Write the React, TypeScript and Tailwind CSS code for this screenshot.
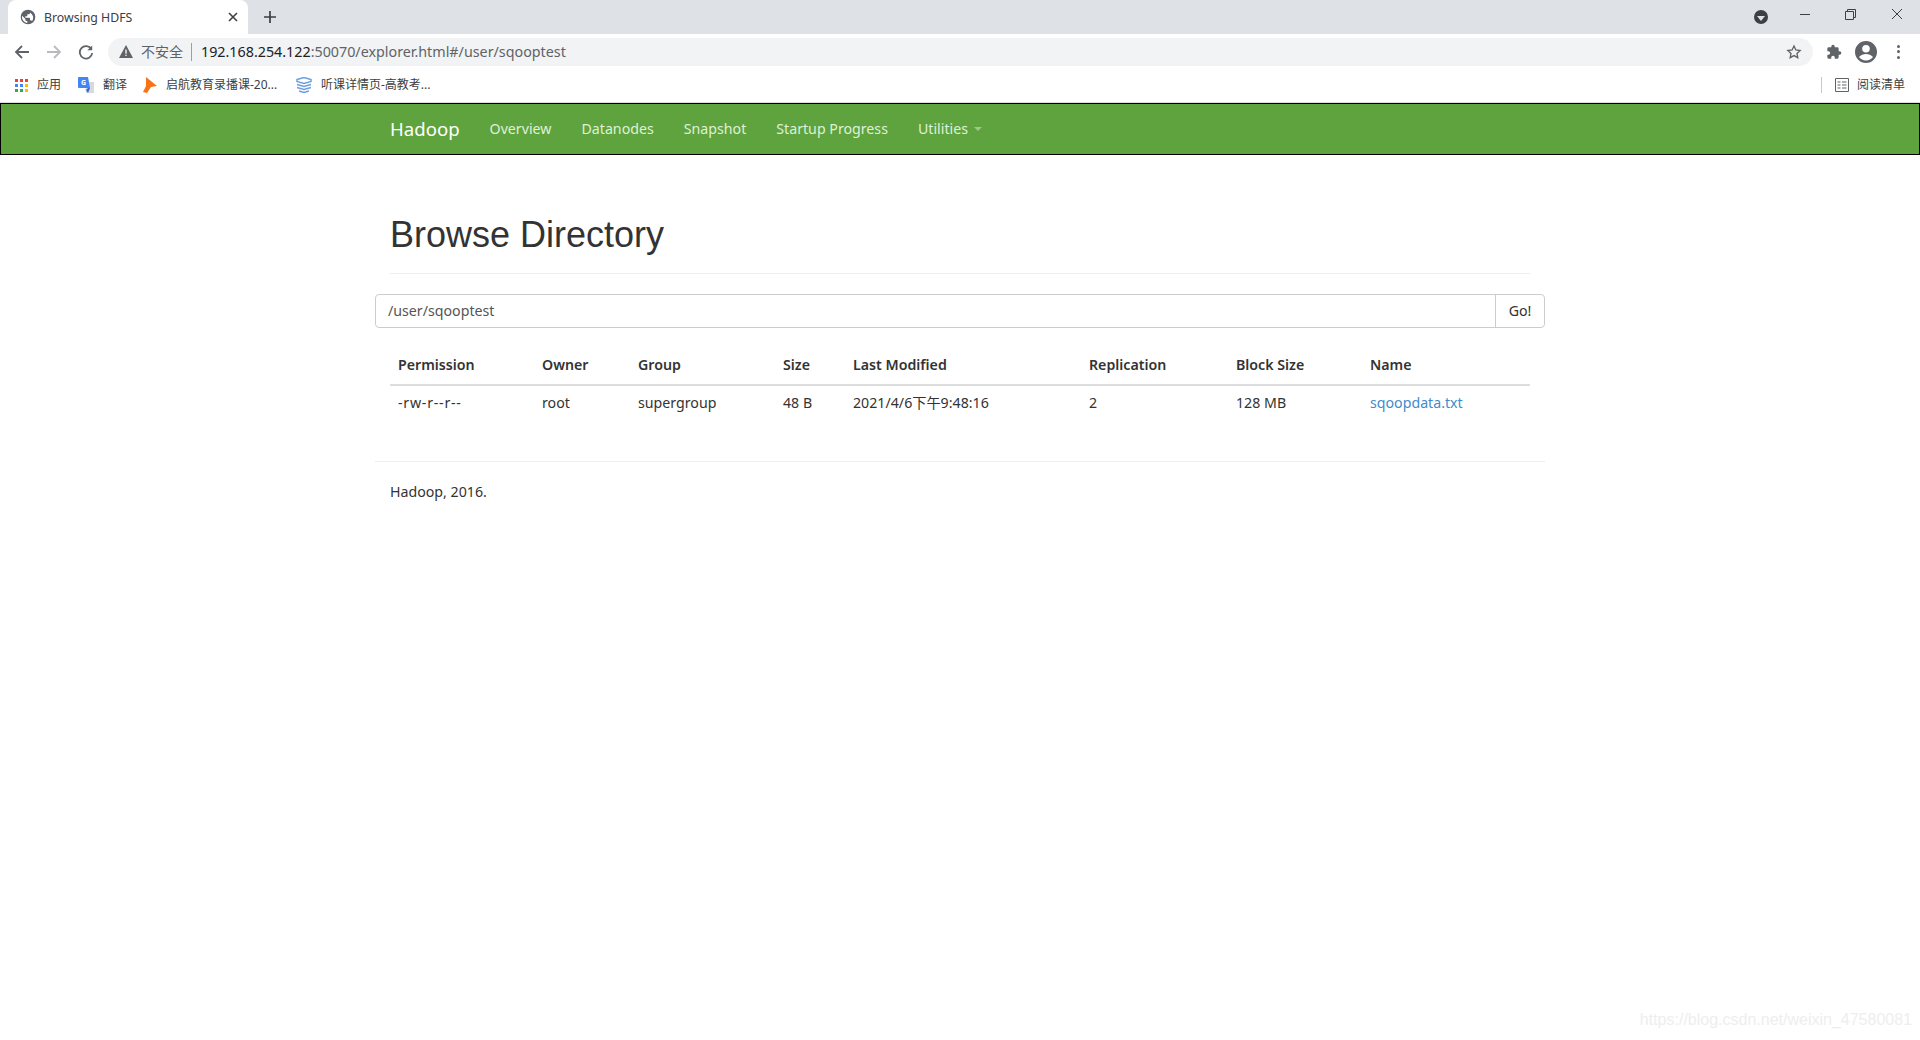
const cjk = "font-['Noto_Sans','Noto_Sans_CJK_SC',sans-serif]";

const headers = [
  { label: "Permission", width: "w-[144px]" },
  { label: "Owner", width: "w-[96px]" },
  { label: "Group", width: "w-[145px]" },
  { label: "Size", width: "w-[70px]" },
  { label: "Last Modified", width: "w-[236px]" },
  { label: "Replication", width: "w-[147px]" },
  { label: "Block Size", width: "w-[134px]" },
  { label: "Name", width: "w-[168px]" },
];

const row = ["-rw-r--r--", "root", "supergroup", "48 B", "2021/4/6下午9:48:16", "2", "128 MB"];

const appColors = ["#ea4335", "#ea4335", "#ea4335", "#4285f4", "#4285f4", "#fbbc04", "#34a853", "#34a853", "#fbbc04"];

function TabStrip() {
  return (
    <div className="flex h-[34px] items-end bg-[#dee1e6] pl-2">
      <div className="flex h-[34px] w-[240px] items-center rounded-t-lg bg-white pl-[12px] pr-[9px]">
        <svg width="16" height="16" viewBox="0 0 24 24" fill="#5f6368">
          <path d="M12 1a11 11 0 1 0 0 22 11 11 0 0 0 0-22Zm-1 19.900A9 9 0 0 1 3.200 10L8 15v1a2 2 0 0 0 2 2h1v2.900Zm7-2.600A2 2 0 0 0 16 17h-1v-3a1 1 0 0 0-1-1H8v-2h2a1 1 0 0 0 1-1V8h2a2 2 0 0 0 2-2v-.9a9 9 0 0 1 3 13.200Z" />
        </svg>
        <span className={`ml-[8px] mt-[2px] flex-1 text-[12.3px] text-[#3c4043] ${cjk}`}>Browsing HDFS</span>
        <svg width="12" height="12" viewBox="0 0 12 12" stroke="#3c4043" strokeWidth="1.6">
          <path d="M2 2l8 8M10 2l-8 8" />
        </svg>
      </div>
      <svg className="mb-[10px] ml-[15px]" width="14" height="14" viewBox="0 0 14 14" stroke="#3c4043" strokeWidth="1.7">
        <path d="M7 1v12M1 7h12" />
      </svg>
      <div className="flex-1" />
      <div className="mb-[10px] mr-[32px] flex h-[14px] w-[14px] items-center justify-center rounded-full bg-[#3c4043]">
        <div className="mt-[2px] h-0 w-0 border-x-[4px] border-t-[5px] border-x-transparent border-t-[#dee1e6]" />
      </div>
      <div className="mb-[19px] mr-[35px] h-[1.5px] w-[10px] bg-[#3c4043]" />
      <svg className="mb-[14px] mr-[35px]" width="11" height="11" viewBox="0 0 11 11" fill="none" stroke="#3c4043">
        <path d="M.5 2.500h8v8h-8zM2.500 2.500v-2h8v8h-2" />
      </svg>
      <svg className="mb-[14px] mr-[17px]" width="12" height="12" viewBox="0 0 12 12" stroke="#3c4043">
        <path d="M1 1l10 10M11 1L1 11" />
      </svg>
    </div>
  );
}

function Toolbar() {
  return (
    <div className="flex h-[34px] items-center bg-white pl-[14px] pt-px">
      <svg width="16" height="16" viewBox="0 0 16 16" fill="none" stroke="#5f6368" strokeWidth="1.8">
        <path d="M15 8H2M8 2L2 8l6 6" />
      </svg>
      <svg className="ml-4" width="16" height="16" viewBox="0 0 16 16" fill="none" stroke="#b8babd" strokeWidth="1.8">
        <path d="M1 8h13M8 2l6 6-6 6" />
      </svg>
      <svg className="ml-4" width="16" height="16" viewBox="0 0 16 16" fill="none" stroke="#5f6368" strokeWidth="1.8">
        <path d="M13.400 5.200A6.200 6.200 0 1 0 14.200 9" />
        <path d="M14.200 1.500v4.800H9.400" fill="#5f6368" strokeWidth="0" />
      </svg>
      <div className="ml-[14px] flex h-7 w-[1705px] items-center rounded-full bg-[#f1f3f4] pl-[11px] pr-[11px]">
        <svg width="14" height="13" viewBox="0 0 14 13" fill="#5f6368">
          <path d="M7 0l7 13H0L7 0Z" />
          <path d="M6.300 4.500h1.400v4.300H6.300zM6.300 9.700h1.400v1.400H6.300z" fill="#f1f3f4" />
        </svg>
        <span className={`ml-[8px] text-[14px] text-[#5f6368] ${cjk}`}>不安全</span>
        <div className="ml-[8px] h-[18px] w-px bg-[#9aa0a6]" />
        <span className={`ml-[9px] flex-1 text-[14.3px] text-[#5f6368] ${cjk}`}>
          <span className="text-[#202124]">192.168.254.122</span>:50070/explorer.html#/user/sqooptest
        </span>
        <svg width="16" height="16" viewBox="0 0 24 24" fill="none" stroke="#5f6368" strokeWidth="2">
          <path d="M12 3l2.800 5.900 6.400.8-4.700 4.400 1.200 6.400L12 17.400l-5.700 3.100 1.200-6.400-4.700-4.400 6.400-.8L12 3Z" />
        </svg>
      </div>
      <svg className="ml-[13px]" width="16" height="16" viewBox="0 0 24 24" fill="#5f6368">
        <path d="M20.500 11H19V7a2 2 0 0 0-2-2h-4V3.500a2.500 2.500 0 0 0-5 0V5H4a2 2 0 0 0-2 2v3.800h1.500a2.700 2.700 0 0 1 0 5.400H2V20a2 2 0 0 0 2 2h3.800v-1.500a2.700 2.700 0 0 1 5.400 0V22H17a2 2 0 0 0 2-2v-4h1.500a2.500 2.500 0 0 0 0-5Z" />
      </svg>
      <svg className="ml-[12px]" width="24" height="24" viewBox="0 0 24 24" fill="#5f6368">
        <path d="M12 1a11 11 0 1 0 0 22 11 11 0 0 0 0-22Zm0 4a3.800 3.800 0 1 1 0 7.600A3.800 3.800 0 0 1 12 5Zm0 15.500a8.800 8.800 0 0 1-7-3.400c1.700-2 4.400-3 7-3s5.300 1 7 3a8.800 8.800 0 0 1-7 3.400Z" />
      </svg>
      <div className="ml-[19px] flex flex-col gap-[2.5px]">
        <div className="h-[3px] w-[3px] rounded-full bg-[#5f6368]" />
        <div className="h-[3px] w-[3px] rounded-full bg-[#5f6368]" />
        <div className="h-[3px] w-[3px] rounded-full bg-[#5f6368]" />
      </div>
    </div>
  );
}

function BookmarksBar() {
  return (
    <div className={`flex h-[35px] items-center border-b border-[#dadce0] bg-white pl-[15px] text-[12px] text-[#3c4043] ${cjk}`}>
      <div className="grid w-[13px] grid-cols-3 gap-[2px]">
        {appColors.map((color, i) => (
          <div key={i} className="h-[3px] w-[3px]" style={{ backgroundColor: color }} />
        ))}
      </div>
      <span className="ml-[9px] w-[25px]">应用</span>
      <svg className="ml-4" width="16" height="16" viewBox="0 0 16 16">
        <path d="M7 5h9v11H8L7 5Z" fill="#d8d9dc" />
        <path d="M1 0h9l2 11H1a1 1 0 0 1-1-1V1a1 1 0 0 1 1-1Z" fill="#4285f4" />
        <path d="M8 13l2-2h2l-2 5-2-3Z" fill="#3367d6" />
        <text x="3" y="8" fontSize="7" fontWeight="bold" fill="#fff">G</text>
      </svg>
      <span className="ml-[9px] w-[25px]">翻译</span>
      <svg className="ml-[15px]" width="14" height="16" viewBox="0 0 14 16" fill="#f97316">
        <path d="M3 0l11 9-6 1-4 6-4-1 3-6-0-9Z" />
      </svg>
      <span className="ml-[9px] w-[113px] whitespace-nowrap">启航教育录播课-20...</span>
      <svg className="ml-[17px]" width="16" height="16" viewBox="0 0 16 16" fill="none" stroke="#6d9fe0" strokeWidth="1.5">
        <path d="M1 2.500l7-2 7 2v2l-7 2-7-2v-2ZM1 7.500l7 2 7-2M1 10.500l7 2 7-2M3 14l5 1.500 5-1.500" />
      </svg>
      <span className="ml-[9px] w-[112px] whitespace-nowrap">听课详情页-高教考...</span>
      <div className="flex-1" />
      <div className="h-4 w-px bg-[#c8c9cb]" />
      <svg className="ml-[13px]" width="14" height="14" viewBox="0 0 14 14" fill="none" stroke="#5f6368">
        <path d="M.5.500h13v13H.500zM2.500 4h3M7 4h4.500M2.500 7h3M7 7h4.500M2.500 10h3M7 10h4.500" />
      </svg>
      <span className="ml-[8px] mr-[15px] w-[48px] whitespace-nowrap">阅读清单</span>
    </div>
  );
}

function Navbar() {
  return (
    <nav className="flex h-[52px] border border-black bg-[#5fa33e] pl-[389px]">
      <a className={`flex items-center pb-px text-[18.6px] text-white ${cjk}`}>Hadoop</a>
      <ul className={`ml-[30px] flex items-center gap-[30px] pb-px text-[14.2px] text-[#dff0d8] ${cjk}`}>
        <li>Overview</li>
        <li>Datanodes</li>
        <li>Snapshot</li>
        <li>Startup Progress</li>
        <li className="flex items-center">
          Utilities
          <span className="ml-[6px] mt-[2px] h-0 w-0 border-x-4 border-t-4 border-x-transparent border-t-[#9cc98a]" />
        </li>
      </ul>
    </nav>
  );
}

function BrowseDirectory() {
  return (
    <main className={`mx-auto w-[1170px] text-[14.2px] text-[#333] ${cjk}`}>
      <div className="mx-[15px] mt-[55px] border-b border-[#eee] pb-[13px]">
        <h1 className="font-['Liberation_Sans',sans-serif] text-[36px] leading-[50px] font-normal">Browse Directory</h1>
      </div>
      <div className="mt-5 flex h-[34px] rounded border border-[#ccc]">
        <div className="flex flex-1 items-center px-3 pb-px text-[#555]">/user/sqooptest</div>
        <div className="flex w-[49px] items-center justify-center border-l border-[#ccc] pb-px">Go!</div>
      </div>
      <table className="mx-[15px] mt-5 w-[1140px] table-fixed">
        <thead>
          <tr className="border-b-2 border-[#ddd]">
            {headers.map((h) => (
              <th key={h.label} className={`${h.width} h-[37px] px-2 pb-[3px] text-left font-semibold`}>
                {h.label}
              </th>
            ))}
          </tr>
        </thead>
        <tbody>
          <tr>
            {row.map((cell, i) => (
              <td key={cell} className={i === 0 ? "h-[37px] px-2 pb-[3px] tracking-[0.75px]" : "h-[37px] px-2 pb-[3px]"}>
                {cell}
              </td>
            ))}
            <td className="h-[37px] px-2 pb-[3px] text-[#428bca]">sqoopdata.txt</td>
          </tr>
        </tbody>
      </table>
      <div className="mt-[39px] border-t border-[#eee] px-[15px] pt-[19px]">Hadoop, 2016.</div>
    </main>
  );
}

export default function App() {
  return (
    <div className="relative h-[1040px] overflow-hidden bg-white">
      <TabStrip />
      <Toolbar />
      <BookmarksBar />
      <Navbar />
      <BrowseDirectory />
      <span className="absolute bottom-[8px] right-[8px] font-['Liberation_Sans',sans-serif] text-[16px] text-[#eeeeee]">
        https://blog.csdn.net/weixin_47580081
      </span>
    </div>
  );
}
